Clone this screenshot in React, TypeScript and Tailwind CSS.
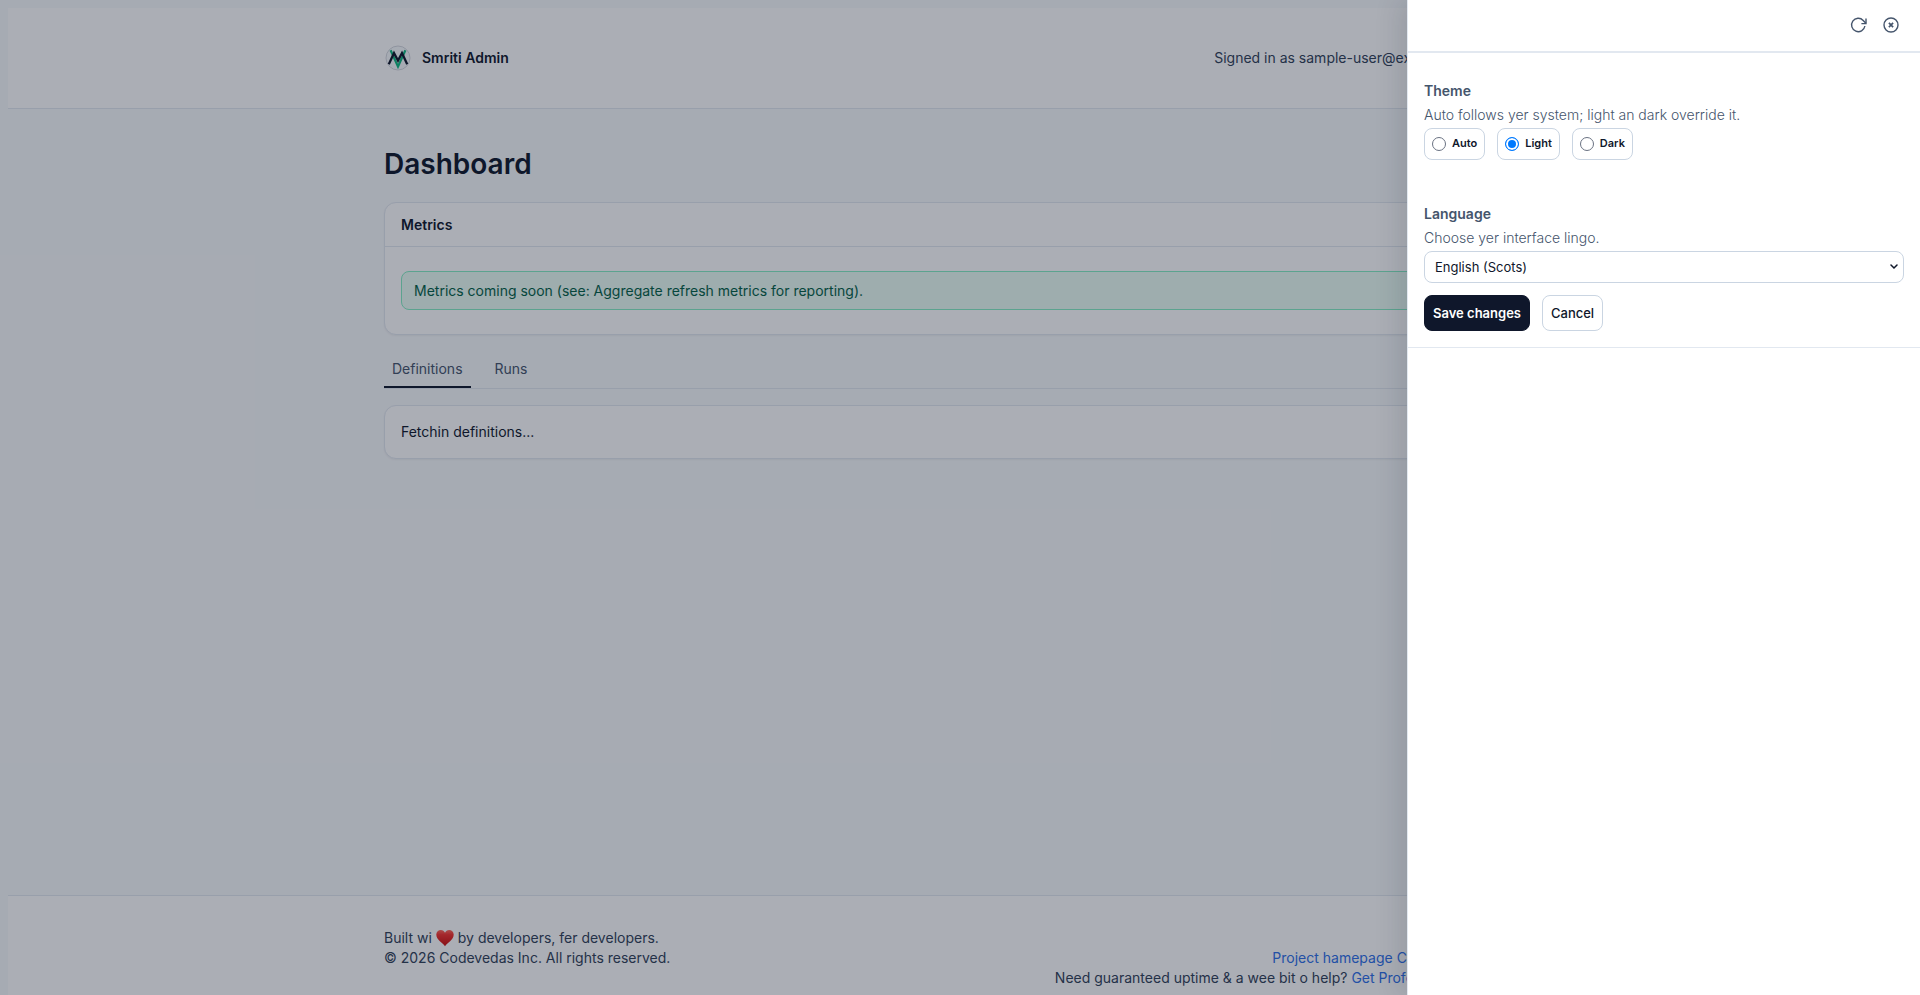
import { useState } from "react";

const themes = ["Auto", "Light", "Dark"];

function Logo() {
  return (
    <svg viewBox="-1 -1 28 28" className="size-7" aria-hidden="true">
      <circle cx="13" cy="13" r="12" fill="#f8fafc" stroke="#d5d8de" strokeWidth="1" />
      <path d="M5.6 5.2 13 21.5 20.4 5.2" fill="none" stroke="#10b981" strokeWidth="2.2" />
      <path d="M3.8 19.2 9 8l4 7.600L17 8l5.200 11.200" fill="none" stroke="#0f172a" strokeWidth="2.3" />
    </svg>
  );
}

function Heart() {
  return (
    <svg viewBox="0 0 18 18" className="mx-1 inline-block size-[18px] align-[-4px]" role="img" aria-label="love">
      <defs>
        <linearGradient id="heart" x1="0" y1="0" x2="0" y2="1">
          <stop offset="0" stopColor="#ff6a5c" />
          <stop offset="0.3" stopColor="#f5302c" />
          <stop offset="1" stopColor="#c70d0d" />
        </linearGradient>
      </defs>
      <path
        d="M9 17.300C7 14.200 0.300 11.200 0.300 5.600 0.300 2.700 2.400 0.900 4.800 0.900 6.800 0.900 8.300 2.100 9 3.800 9.700 2.100 11.200 0.900 13.200 0.900 15.600 0.900 17.700 2.700 17.700 5.600 17.700 11.200 11 14.200 9 17.300Z"
        fill="url(#heart)"
      />
    </svg>
  );
}

function RefreshIcon() {
  return (
    <svg viewBox="0 0 18 18" className="size-[18px]" fill="none" stroke="currentColor" strokeWidth="1.4" aria-hidden="true">
      <path d="M14.900 10A6.700 6.700 0 1 1 13.200 4.400L15.900 7.200" />
      <path d="M16 2.600v5H11.400" />
    </svg>
  );
}

function CloseIcon() {
  return (
    <svg viewBox="0 0 18 18" className="size-[18px]" fill="none" stroke="currentColor" strokeWidth="1.4" aria-hidden="true">
      <circle cx="9" cy="9" r="7" />
      <path d="M6.900 6.900l4.200 4.200M11.100 6.900l-4.200 4.200" strokeWidth="1.700" />
    </svg>
  );
}

function Page() {
  return (
    <div className="flex min-h-[calc(100vh+33px)] flex-col bg-slate-50 p-2">
      <header className="border-b border-slate-200 bg-white py-8">
        <div className="mx-auto flex h-9 max-w-6xl items-center justify-between">
          <div className="flex items-center gap-2.5 text-sm font-semibold">
            <Logo />
            <span>Smriti Admin</span>
          </div>
          <div className="flex items-center gap-4 text-slate-700">
            <span>Signed in as sample-user@example.com</span>
            <button type="button" className="size-9 rounded-lg border border-slate-300" aria-label="Settings" />
          </div>
        </div>
      </header>

      <main className="mx-auto w-full max-w-6xl flex-1 pt-[37px]">
        <h1 className="text-[28px] leading-9 font-semibold">Dashboard</h1>
        <section className="mt-5 rounded-xl border border-slate-200 bg-white shadow-xs">
          <h2 className="border-b border-slate-200 px-4 py-3 text-sm leading-[19px] font-semibold">Metrics</h2>
          <div className="px-4 py-6">
            <p className="rounded-lg border border-[#86efc5] bg-emerald-50 px-3 py-2 leading-[21px] text-emerald-800">
              Metrics coming soon (see: Aggregate refresh metrics for reporting).
            </p>
          </div>
        </section>
        <div role="tablist" className="mt-4 flex gap-4 border-b border-slate-200 text-slate-600">
          <button type="button" role="tab" aria-selected="true" className="border-b-2 border-slate-900 px-2 pt-2 pb-[7px]">
            Definitions
          </button>
          <button type="button" role="tab" aria-selected="false" className="border-b-2 border-transparent px-2 pt-2 pb-[7px]">
            Runs
          </button>
        </div>
        <section className="mt-4 rounded-xl border border-slate-200 bg-white p-4 shadow-xs">Fetchin definitions...</section>
      </main>

      <footer className="border-t border-slate-200 bg-white py-8 text-slate-700">
        <div className="mx-auto flex max-w-6xl justify-between">
          <div>
            <p>
              Built wi
              <Heart />
              by developers, fer developers.
            </p>
            <p>© 2026 Codevedas Inc. All rights reserved.</p>
          </div>
          <div className="pt-5 text-right">
            <p className="flex justify-end gap-1 text-[#2e6fe8]">
              <a href="#home">Project hamepage</a>
              <a href="#community">Community channels</a>
            </p>
            <p>
              Need guaranteed uptime &amp; a wee bit o help?{" "}
              <a href="#support" className="text-[#2e6fe8]">
                Get Professional Assistance
              </a>
            </p>
          </div>
        </div>
      </footer>
    </div>
  );
}

function Drawer() {
  const [theme, setTheme] = useState("Light");
  return (
    <aside
      aria-label="Preferences"
      className="absolute inset-y-0 right-0 w-[513px] border-l border-slate-200 bg-white shadow-[-8px_0_24px_rgba(15,23,42,0.12)]"
    >
      <div className="flex h-[53px] items-center justify-end gap-[14px] border-b-2 border-slate-200 px-5 pb-px text-slate-600">
        <button type="button" aria-label="Refresh">
          <RefreshIcon />
        </button>
        <button type="button" aria-label="Close">
          <CloseIcon />
        </button>
      </div>
      <form className="border-b border-slate-200 px-4 pt-7 pb-4" onSubmit={(e) => e.preventDefault()}>
        <fieldset>
          <legend className="text-sm font-semibold text-slate-600">Theme</legend>
          <p className="mt-1 font-light text-slate-600">Auto follows yer system; light an dark override it.</p>
          <div className="mt-[3px] flex gap-3">
            {themes.map((name) => (
              <label key={name} className="flex h-8 items-center gap-1.5 rounded-lg border border-slate-300 px-[7px] text-[11px] font-semibold">
                <input
                  type="radio"
                  name="theme"
                  checked={theme === name}
                  onChange={() => setTheme(name)}
                  className="size-[14px] appearance-none rounded-full border border-gray-500 checked:border-[#007aff] checked:bg-[#007aff] checked:shadow-[inset_0_0_0_2px_white]"
                />
                {name}
              </label>
            ))}
          </div>
        </fieldset>
        <div className="mt-11">
          <label htmlFor="language" className="block font-semibold text-slate-600">
            Language
          </label>
          <p className="mt-1 font-light text-slate-600">Choose yer interface lingo.</p>
          <div className="mt-[3px] grid items-center">
            <select
              id="language"
              defaultValue="sco"
              className="col-start-1 row-start-1 h-8 w-full appearance-none rounded-lg border border-slate-300 bg-white px-2.5 text-[13px]"
            >
              <option value="sco">English (Scots)</option>
            </select>
            <svg viewBox="0 0 8 6" className="pointer-events-none col-start-1 row-start-1 mr-1.5 h-1.5 w-2 justify-self-end" aria-hidden="true">
              <path d="M1 1l3 3 3-3" fill="none" stroke="#0f172a" strokeWidth="1.5" strokeLinecap="round" />
            </svg>
          </div>
          <div className="mt-3 flex gap-3 text-[13px]">
            <button type="submit" className="h-9 rounded-lg border border-slate-900 bg-slate-900 px-2 font-semibold text-white">
              Save changes
            </button>
            <button type="button" className="h-9 rounded-lg border border-slate-300 bg-white px-2 font-medium">
              Cancel
            </button>
          </div>
        </div>
      </form>
    </aside>
  );
}

export default function App() {
  return (
    <div className="relative h-screen overflow-hidden font-[Inter,'Liberation_Sans',sans-serif] text-sm text-slate-900">
      <Page />
      <div className="absolute inset-0 bg-[rgba(15,23,42,0.35)]" />
      <Drawer />
    </div>
  );
}
